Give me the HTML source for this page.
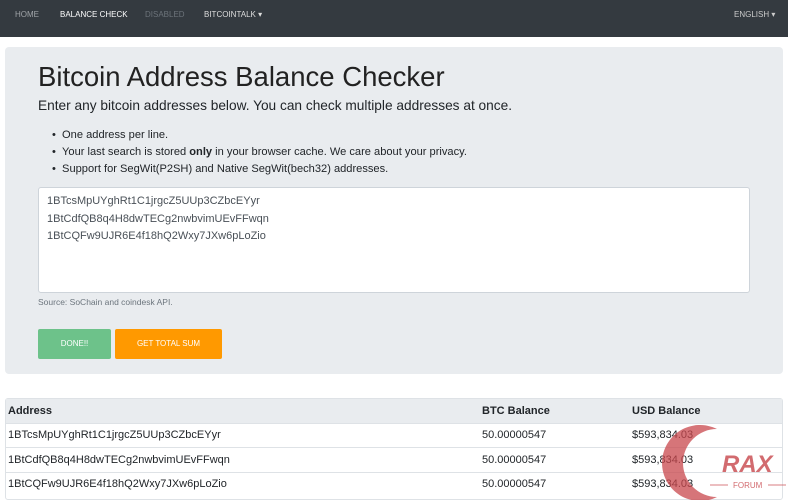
<!DOCTYPE html><html><head><style>
body{margin:0;width:788px;height:500px;overflow:hidden;background:#fff;font-family:"Liberation Sans",sans-serif;color:#212529;position:relative}
.nav{height:37px;background:#343a40;position:relative;font-size:8px}
.nav span{position:absolute;top:10px;color:#a0a4a8}
.j{position:absolute;left:5px;top:47px;width:778px;height:327px;background:#e9ecef;border-radius:4px}
.a{position:absolute}
</style></head><body>
<div class="nav">
<span style="left:15px">HOME</span>
<span style="left:60px;color:#fff">BALANCE CHECK</span>
<span style="left:145px;color:#6c737a">DISABLED</span>
<span style="left:204px;color:#ddd">BITCOINTALK ▾</span>
<span style="left:734px;color:#ccc">ENGLISH ▾</span>
</div>
<div class="j"></div>
<div class="a" style="left:38px;top:61px;font-size:27.5px;color:#222">Bitcoin Address Balance Checker</div>
<div class="a" style="left:38px;top:98px;font-size:13.7px">Enter any bitcoin addresses below. You can check multiple addresses at once.</div>
<div class="a" style="left:52px;top:127px;font-size:11.1px;line-height:17px">
• &nbsp;One address per line.<br>• &nbsp;Your last search is stored <b>only</b> in your browser cache. We care about your privacy.<br>• &nbsp;Support for SegWit(P2SH) and Native SegWit(bech32) addresses.</div>
<div class="a" style="left:38px;top:187px;width:710px;height:104px;background:#fff;border:1px solid #ced4da;border-radius:3px"></div>
<div class="a" style="left:47px;top:193px;font-size:11px;line-height:17.5px;color:#495057">1BTcsMpUYghRt1C1jrgcZ5UUp3CZbcEYyr<br>1BtCdfQB8q4H8dwTECg2nwbvimUEvFFwqn<br>1BtCQFw9UJR6E4f18hQ2Wxy7JXw6pLoZio</div>
<div class="a" style="left:38px;top:297px;font-size:8.5px;color:#6c757d">Source: SoChain and coindesk API.</div>
<div class="a" style="left:38px;top:329px;width:73px;height:30px;background:#6dc28a;color:#fff;font-size:8px;line-height:30px;text-align:center;border-radius:2px">DONE!!</div>
<div class="a" style="left:115px;top:329px;width:107px;height:30px;background:#ff9900;color:#fff;font-size:8px;line-height:30px;text-align:center;border-radius:2px">GET TOTAL SUM</div>
<div class="a" style="left:5px;top:398px;width:776px;height:100px;border:1px solid #dee2e6;border-radius:3px"></div>
<div class="a" style="left:6px;top:399px;width:776px;height:24px;background:#e9ecef;border-bottom:1px solid #dee2e6"></div>
<div class="a" style="left:6px;top:447px;width:776px;height:1px;background:#dee2e6"></div>
<div class="a" style="left:6px;top:472px;width:776px;height:1px;background:#dee2e6"></div>
<div class="a" style="left:8px;top:405px;font-size:11px;font-weight:bold">Address</div>
<div class="a" style="left:482px;top:405px;font-size:11px;font-weight:bold">BTC Balance</div>
<div class="a" style="left:632px;top:405px;font-size:11px;font-weight:bold">USD Balance</div>
<div class="a" style="left:8px;top:423px;font-size:11px;line-height:24.5px">1BTcsMpUYghRt1C1jrgcZ5UUp3CZbcEYyr<br>1BtCdfQB8q4H8dwTECg2nwbvimUEvFFwqn<br>1BtCQFw9UJR6E4f18hQ2Wxy7JXw6pLoZio</div>
<div class="a" style="left:482px;top:423px;font-size:11px;line-height:24.5px">50.00000547<br>50.00000547<br>50.00000547</div>
<div class="a" style="left:632px;top:423px;font-size:11px;line-height:24.5px">$593,834.03<br>$593,834.03<br>$593,834.03</div>
<svg class="a" style="left:660px;top:425px" width="128" height="75">
<path d="M57 4 A38 38 0 1 0 57 72 A30 30 0 0 1 57 4Z" fill="#c8474c" opacity="0.75"/>
<text x="62" y="47" font-size="24" font-weight="bold" font-style="italic" fill="#c8474c" opacity="0.8" font-family="Liberation Sans">RAX</text>
<line x1="50" y1="60" x2="68" y2="60" stroke="#c8474c" opacity=".7"/>
<text x="73" y="63" font-size="8" fill="#c8474c" opacity="0.8" font-family="Liberation Sans">FORUM</text>
<line x1="108" y1="60" x2="126" y2="60" stroke="#c8474c" opacity=".7"/>
</svg>
</body></html>
